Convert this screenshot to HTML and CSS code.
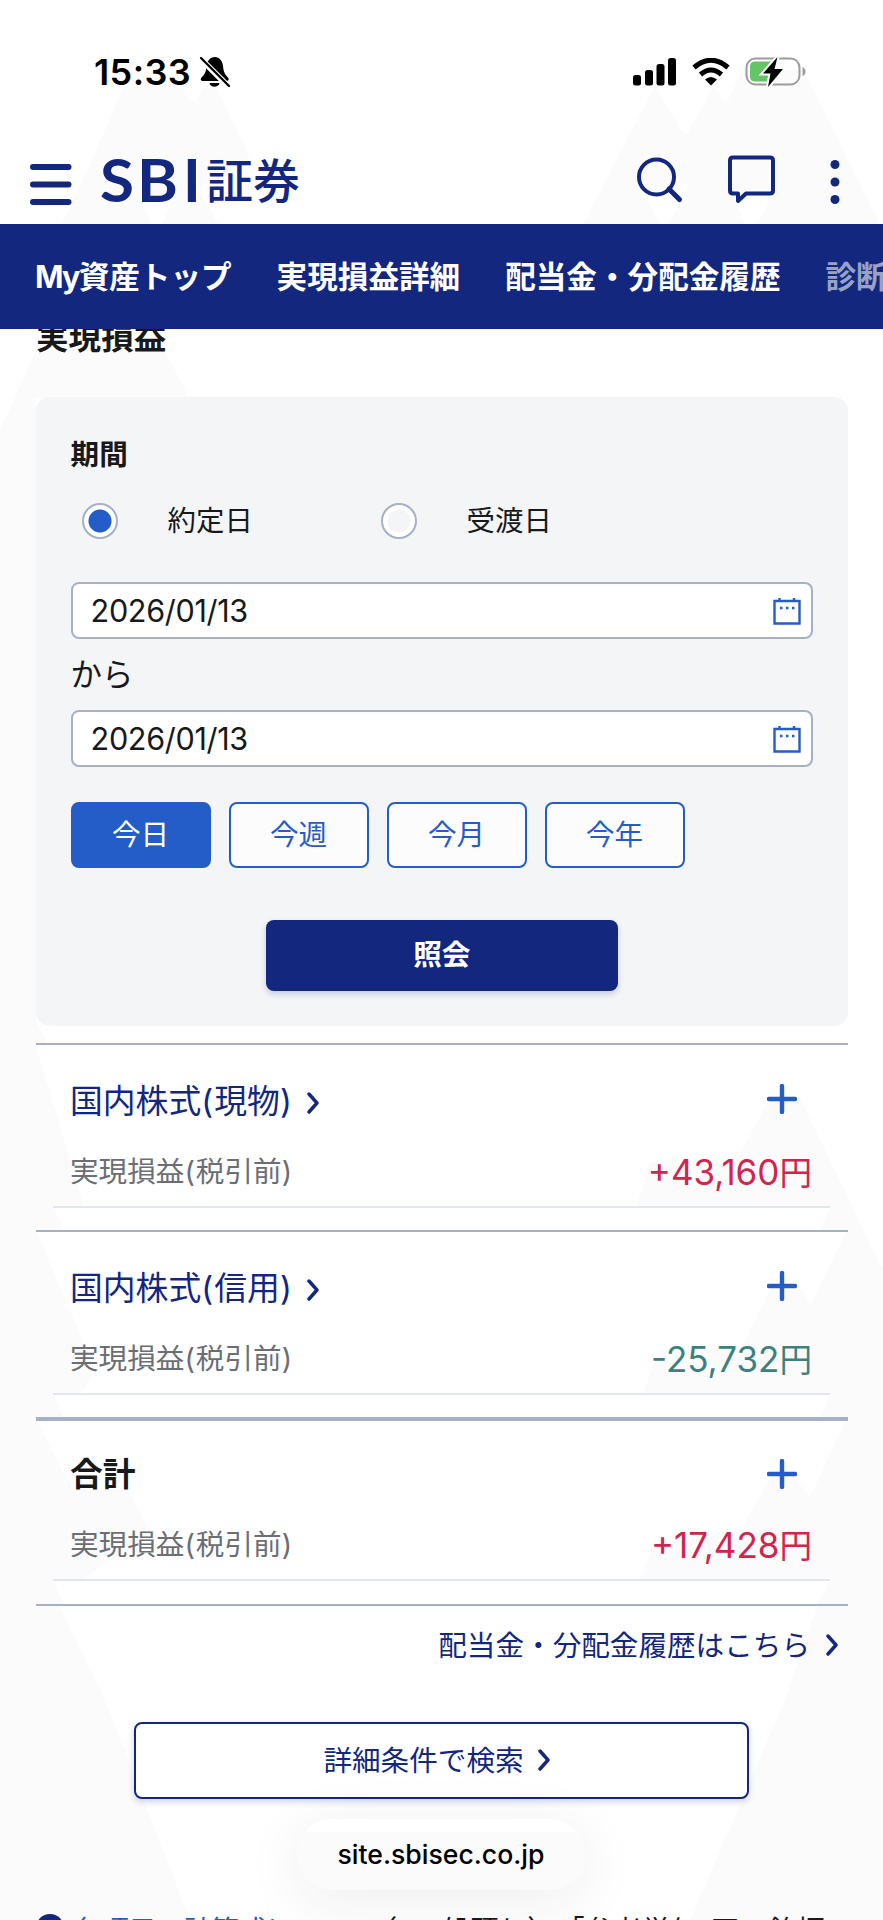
FILE: index.html
```
<!DOCTYPE html>
<html lang="ja">
<head>
    <meta charset="UTF-8">
    <meta name="viewport" content="width=device-width, initial-scale=1.0">
    <title>SBI証券 - 実現損益</title>
    <link rel="stylesheet" href="styles.css">
</head>
<body>

    <!-- Pale mountain shapes behind the page -->
    <svg class="backdrop" viewBox="0 0 883 1920" aria-hidden="true">
        <path d="M62 224L90 165L123 88H182L190 102H195L203 88H217L250 158L198 188L218 224H162L172 200H140L152 224Z"/>
        <path d="M583 224L655 86L683 133H688L713 86L723 100H728L742 70H804L880 224Z"/>
        <path d="M0 430L36 352H165L190 398H36V1020L48 1046H36L84 1206H53L64 1230H36L95 1370L82 1393H53L63 1418H36L72 1490H128L150 1532L82 1580H53L63 1604H58L105 1700L190 1920H0Z"/>
        <path d="M883 1270L800 1098H770L735 1162H650L636 1207H830L820 1231H847L810 1306L803 1290H770L740 1350H660L643 1393H830L820 1418H847L810 1497L795 1478H770L735 1540H655L640 1580H830L818 1604L785 1700L690 1920H883Z"/>
        <path class="snow" d="M646 195L660 224H669L690 182ZM733 195L744 224H758L772 195Z"/>
    </svg>

    <header class="header">
        <div class="status-bar">
            <div class="status-left">
                <span class="clock">15:33</span>
                <svg width="32" height="34" viewBox="0 0 32 34">
                    <path d="M16 2C11 2 8 6 7.500 11C7 18 5 20 2.500 22.500C1 24.500 2 26 4 26H27C30 26 30.500 24 28.500 22C26 19.500 24.500 17 24 11C23.500 6 20.500 2 16 2ZM10.500 28H20.500C19.800 33 11.200 33 10.500 28Z"/>
                    <path d="M1 3L29 31" stroke="#fff" stroke-width="6"/>
                    <path d="M2 3L30 31" stroke="#000" stroke-width="2.300" stroke-linecap="round"/>
                </svg>
            </div>
            <div class="status-right">
                <svg width="44" height="28" viewBox="0 0 44 28">
                    <rect x="0" y="17" width="8" height="10.500" rx="2.500"/>
                    <rect x="12" y="12" width="8" height="15.500" rx="2.500"/>
                    <rect x="23.500" y="6" width="8" height="21.500" rx="2.500"/>
                    <rect x="35" y="0" width="8" height="27.500" rx="2.500"/>
                </svg>
                <svg width="38" height="28" viewBox="0 0 38 28">
                    <path d="M2 9.500Q19 -5 36 9.500" fill="none" stroke="#000" stroke-width="5"/>
                    <path d="M8.500 16.500Q19 7.500 29.500 16.500" fill="none" stroke="#000" stroke-width="5"/>
                    <path d="M13 21.500Q19 16.500 25 21.500L19 27.500Z"/>
                </svg>
                <svg width="62" height="32" viewBox="0 0 62 32">
                    <rect x="1.500" y="2.500" width="53" height="26" rx="9" fill="none" stroke="#9b9ba0" stroke-width="2"/>
                    <path d="M57.500 11V20Q60.500 18.500 60.500 15.500T57.500 11Z" fill="#9b9ba0"/>
                    <path d="M10 5.500H27L22 25.500H10Q5 25.500 5 20.500V10.500Q5 5.500 10 5.500Z" fill="#65c466"/>
                    <path d="M32.500 1L18 17.500H25.500L23 31L38 13H29.500Z" stroke="#fff" stroke-width="4"/>
                    <path d="M32.500 1L18 17.500H25.500L23 31L38 13H29.500Z"/>
                </svg>
            </div>
        </div>

        <div class="site-bar">
            <svg class="menu-icon" width="42" height="42" viewBox="0 0 42 42">
                <path d="M3 3H38.500M3 20.500H38.500M3 38H38.500" stroke-width="6"/>
            </svg>
            <svg class="logo" width="206" height="80" viewBox="0 0 206 80">
                <text class="logo-latin" x="0" y="60" textLength="34" lengthAdjust="spacingAndGlyphs">S</text>
                <text class="logo-latin" x="37" y="60" textLength="41" lengthAdjust="spacingAndGlyphs">B</text>
                <text class="logo-latin" x="83" y="60">I</text>
                <text class="logo-kanji" x="106" y="56">証券</text>
            </svg>
            <div class="tools">
                <svg width="48" height="50" viewBox="0 0 48 50">
                    <circle cx="20.500" cy="22" r="17.500" stroke-width="4"/>
                    <path d="M33 34L43.500 44.500" stroke-width="5"/>
                </svg>
                <svg width="48" height="50" viewBox="0 0 48 50">
                    <path d="M5 2.500H42Q45 2.500 45 5.500V35.500Q45 38.500 42 38.500H18L10 46V38.500H5Q2 38.500 2 35.500V5.500Q2 2.500 5 2.500Z" stroke-width="4"/>
                </svg>
                <svg class="dots" width="10" height="50" viewBox="0 0 10 50">
                    <circle cx="5" cy="9.500" r="4.500"/>
                    <circle cx="5" cy="27" r="4.500"/>
                    <circle cx="5" cy="44.500" r="4.500"/>
                </svg>
            </div>
        </div>
    </header>

    <nav class="nav">
        <a><span class="my">My</span>資産トップ</a>
        <a>実現損益詳細</a>
        <a>配当金・分配金履歴</a>
        <a class="faded">診断</a>
    </nav>

    <main class="main">
        <h1 class="page-title">実現損益</h1>

        <section class="search-card">
            <h2 class="card-title">期間</h2>
            <div class="radios">
                <label class="radio-item"><span class="radio checked"></span><span class="radio-text">約定日</span></label>
                <label class="radio-item"><span class="radio"></span><span class="radio-text">受渡日</span></label>
            </div>
            <div class="date-field">
                <span>2026/01/13</span>
                <svg class="calendar" width="28" height="28" viewBox="0 0 28 28">
                    <path d="M1.500 4H26.500V26.500H1.500ZM6.500 1V5M21 1V5"/>
                    <path d="M7 11H9.500M13 11H15.500M19 11H21.500"/>
                </svg>
            </div>
            <div class="from">から</div>
            <div class="date-field">
                <span>2026/01/13</span>
                <svg class="calendar" width="28" height="28" viewBox="0 0 28 28">
                    <path d="M1.500 4H26.500V26.500H1.500ZM6.500 1V5M21 1V5"/>
                    <path d="M7 11H9.500M13 11H15.500M19 11H21.500"/>
                </svg>
            </div>
            <div class="ranges">
                <div class="range active">今日</div>
                <div class="range">今週</div>
                <div class="range">今月</div>
                <div class="range">今年</div>
            </div>
            <div class="submit">照会</div>
        </section>

        <section class="result">
            <div class="result-head">
                <a class="result-title">国内株式<i>(</i>現物<i>)</i><svg class="arrow" width="12" height="22" viewBox="0 0 12 22"><path d="M2 2L10 11L2 20"/></svg></a>
                <svg class="plus" width="30" height="30" viewBox="0 0 30 30"><path d="M15 2V28M2 15H28"/></svg>
            </div>
            <div class="result-row">
                <span class="label">実現損益<i>(</i>税引前<i>)</i></span>
                <span class="amount gain">+43,160<span class="yen">円</span></span>
            </div>
        </section>

        <section class="result">
            <div class="result-head">
                <a class="result-title">国内株式<i>(</i>信用<i>)</i><svg class="arrow" width="12" height="22" viewBox="0 0 12 22"><path d="M2 2L10 11L2 20"/></svg></a>
                <svg class="plus" width="30" height="30" viewBox="0 0 30 30"><path d="M15 2V28M2 15H28"/></svg>
            </div>
            <div class="result-row">
                <span class="label">実現損益<i>(</i>税引前<i>)</i></span>
                <span class="amount loss">-25,732<span class="yen">円</span></span>
            </div>
        </section>

        <section class="result total">
            <div class="result-head">
                <span class="result-title">合計</span>
                <svg class="plus" width="30" height="30" viewBox="0 0 30 30"><path d="M15 2V28M2 15H28"/></svg>
            </div>
            <div class="result-row">
                <span class="label">実現損益<i>(</i>税引前<i>)</i></span>
                <span class="amount gain">+17,428<span class="yen">円</span></span>
            </div>
        </section>

        <a class="history-link">配当金・分配金履歴はこちら<svg class="arrow" width="12" height="22" viewBox="0 0 12 22"><path d="M2 2L10 11L2 20"/></svg></a>

        <a class="detail-btn">詳細条件で検索<svg class="arrow" width="12" height="22" viewBox="0 0 12 22"><path d="M2 2L10 11L2 20"/></svg></a>

        <div class="note">
            <span class="help">?</span>
            <a>各項目の計算式に</a>
            <span class="note-open">（</span>
            <span class="note-text">一般預り）で「参考単価1円の銘柄</span>
        </div>
    </main>

    <!-- Browser address pill -->
    <div class="address">site.sbisec.co.jp</div>

</body>
</html>
```
FILE: styles.css
```
* {
    box-sizing: border-box;
}

body {
    margin: 0;
    width: 883px;
    height: 1920px;
    overflow: hidden;
    position: relative;
    background: #fff;
    color: #18191b;
    font-family: Inter, "Noto Sans CJK JP", sans-serif;
    font-size: 28.6px;
}

svg {
    display: block;
    flex: none;
}

.backdrop {
    position: absolute;
    top: 0;
    left: 0;
    width: 883px;
    height: 1920px;
    z-index: -1;
    fill: #fbfbfb;
}

.backdrop .snow {
    fill: #fff;
}

/* Header */
.header {
    height: 224px;
    padding-top: 52px;
}

.status-bar {
    display: flex;
    justify-content: space-between;
    align-items: center;
    height: 40px;
    padding: 0 76px 0 94px;
    color: #000;
}

.status-left,
.status-right {
    display: flex;
    align-items: center;
}

.status-left {
    gap: 8px;
}

.status-right {
    gap: 15px;
}

.clock {
    font-size: 36px;
    font-weight: 600;
    letter-spacing: 0.4px;
}

.site-bar {
    display: flex;
    align-items: center;
    height: 60px;
    margin-top: 61px;
    padding: 0 43px 0 30px;
}

.site-bar svg {
    fill: none;
    stroke: #13277f;
    stroke-linecap: round;
    stroke-linejoin: round;
}

.site-bar .menu-icon {
    margin-top: 4px;
}

.site-bar .logo {
    margin-left: 28px;
    margin-top: -3px;
    fill: #13277f;
    stroke: none;
}

.logo-latin {
    font-family: Lato, sans-serif;
    font-size: 60px;
    font-weight: 700;
}

.logo-kanji {
    font-family: "Noto Sans CJK JP", sans-serif;
    font-size: 47px;
    font-weight: 500;
}

.tools {
    display: flex;
    gap: 44px;
    margin: -6px 0 0 auto;
}

.tools .dots {
    margin-left: 10px;
    fill: #13277f;
    stroke: none;
}

/* Navigation */
.nav {
    position: relative;
    z-index: 1;
    display: flex;
    align-items: center;
    gap: 45px;
    height: 105px;
    padding-left: 35px;
    overflow: hidden;
    background: #13277f;
    color: #fff;
    font-size: 30.6px;
    font-weight: 700;
    line-height: 40px;
    white-space: nowrap;
}

.nav .my {
    letter-spacing: -1.8px;
}

.nav .faded {
    color: #98a2c8;
}

/* Search card */
.main {
    padding: 0 35px 0 36px;
}

.page-title {
    margin: -10px 0 42px;
    font-size: 32.6px;
    font-weight: 700;
    line-height: 36px;
}

.search-card {
    height: 629px;
    padding: 41px 35px 0 34.6px;
    border-radius: 14px;
    background: #f4f5f7;
}

.card-title {
    margin: 0;
    font-size: 28.6px;
    font-weight: 700;
    line-height: 34px;
}

.radios {
    display: flex;
    margin: 31px 0 43px;
    padding-left: 11px;
}

.radio-item {
    display: flex;
    align-items: center;
    gap: 50px;
    width: 299px;
    height: 36px;
    font-size: 28.4px;
}

.radio-text {
    line-height: 36px;
    margin-top: -1px;
}

.radio {
    width: 36px;
    height: 36px;
    border: 2px solid #a7b0c5;
    border-radius: 50%;
    background: radial-gradient(circle, #f4f5f7 0 11px, #fff 12px);
}

.radio.checked {
    background: radial-gradient(circle, #245dc8 0 11px, #fff 12px);
}

.date-field {
    display: flex;
    align-items: center;
    justify-content: space-between;
    height: 57px;
    padding: 0 10px 0 18px;
    border: 2px solid #a7b0c5;
    border-radius: 8px;
    background: #fff;
    font-size: 30.6px;
    letter-spacing: -0.35px;
}

.calendar {
    fill: none;
    stroke: #245dc8;
    stroke-width: 2.4;
}

.from {
    height: 71px;
    font-size: 31.5px;
    line-height: 72px;
}

.ranges {
    display: flex;
    gap: 18px;
    margin-top: 35px;
}

.range {
    width: 140px;
    height: 66px;
    border: 2px solid #245dc8;
    border-radius: 8px;
    background: #fcfcfc;
    color: #245dc8;
    line-height: 62px;
    text-align: center;
}

.range.active {
    background: #245dc8;
    color: #fff;
}

.submit {
    width: 352px;
    height: 71px;
    margin: 52px auto 0;
    border-radius: 8px;
    background: #13277f;
    box-shadow: 0 3px 6px rgba(19, 39, 127, 0.2);
    color: #fff;
    font-weight: 700;
    line-height: 70px;
    text-align: center;
}

/* Results */
.result {
    height: 187px;
    padding: 35px 18px 0 17px;
    border-top: 2px solid #a7b0c5;
}

.search-card + .result {
    margin-top: 17px;
}

.result i {
    display: inline-block;
    width: 0.4em;
    font-style: normal;
}

.result-head {
    display: flex;
    align-items: center;
    justify-content: space-between;
    height: 42px;
    padding: 0 33px 0 17px;
}

.result-title {
    display: flex;
    align-items: center;
    color: #13277f;
    font-size: 32.8px;
    line-height: 42px;
}

.arrow {
    margin-left: 14px;
    fill: none;
    stroke: #13277f;
    stroke-width: 3.4;
    stroke-linecap: round;
    stroke-linejoin: round;
}

.result .arrow {
    margin-top: 3px;
}

.plus {
    margin-top: -4px;
    fill: none;
    stroke: #245dc8;
    stroke-width: 4.4;
    stroke-linecap: round;
}

.result-row {
    display: flex;
    align-items: center;
    justify-content: space-between;
    height: 86px;
    padding: 11px 18px 0 17px;
    border-bottom: 2px solid #e4e6ee;
}

.label {
    color: #6b6e74;
}

.amount {
    margin-top: 5px;
    font-size: 35px;
    line-height: 50px;
}

.yen {
    font-size: 32.6px;
}

.gain {
    color: #d2244c;
}

.loss {
    color: #3b817f;
}

.total {
    height: 189px;
    padding-top: 32px;
    border-top-width: 4px;
    border-bottom: 2px solid #a7b0c5;
}

.total .plus {
    margin-top: -1px;
}

.total .result-title {
    color: #18191b;
    font-weight: 700;
}

/* Links under the results */
.history-link {
    display: flex;
    align-items: center;
    justify-content: flex-end;
    height: 80px;
    padding: 0 10px 5px 0;
    color: #13277f;
}

.history-link .arrow,
.detail-btn .arrow {
    margin-top: 3px;
}

.history-link .arrow {
    margin-left: 16px;
}

.detail-btn {
    display: flex;
    align-items: center;
    justify-content: center;
    width: 615px;
    height: 77px;
    margin: 36px 0 0 98px;
    padding: 0 10px 5px 0;
    border: 2px solid #13277f;
    border-radius: 8px;
    background: #fff;
    box-shadow: 0 3px 6px rgba(19, 39, 127, 0.2);
    color: #13277f;
}

.note {
    display: flex;
    align-items: center;
    height: 40px;
    margin-top: 109px;
    white-space: nowrap;
    font-size: 28.4px;
    font-feature-settings: "halt";
}

.note a {
    width: 310px;
    margin-left: 9px;
    color: #245dc8;
    letter-spacing: -0.8px;
}

.note-open {
    width: 30px;
}

.note-text {
    letter-spacing: 0.2px;
}

.help {
    width: 28px;
    height: 28px;
    border-radius: 50%;
    background: #13277f;
    color: #fff;
    font-size: 22px;
    font-weight: 700;
    line-height: 28px;
    text-align: center;
}

/* Address pill */
.address {
    position: absolute;
    top: 1819px;
    left: 297px;
    width: 288px;
    height: 71px;
    border-radius: 36px;
    background: linear-gradient(#fff 13px, #fbfbfb 14px);
    box-shadow: 0 10px 60px rgba(40, 40, 70, 0.08);
    color: #000;
    font-size: 26.6px;
    font-weight: 500;
    line-height: 71px;
    text-align: center;
}
```
